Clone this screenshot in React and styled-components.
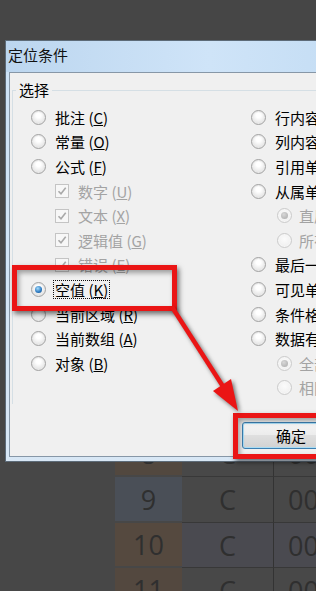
import React from "react";
import styled, { createGlobalStyle } from "styled-components";

const GlobalStyle = createGlobalStyle`
  html, body {
    margin: 0;
    padding: 0;
    background: #464646;
  }
  body {
    overflow: hidden;
    font-family: "Noto Sans CJK SC", "Liberation Sans", sans-serif;
  }
`;

const Page = styled.div`
  position: relative;
  width: 316px;
  height: 591px;
  overflow: hidden;
  background: #464646;
  display: flex;
  flex-direction: column;
  padding-top: 40px;
  box-sizing: border-box;
`;

const Dialog = styled.div`
  position: relative;
  z-index: 2;
  margin-left: 5px;
  width: 340px;
  height: 422px;
  flex-shrink: 0;
  box-sizing: border-box;
  border: 1px solid #5d6b78;
  border-right: none;
  background: linear-gradient(to bottom, #c2daf1 0, #cde2f6 30px, #d8e7f5 100%);
  display: flex;
  flex-direction: column;
`;

const TitleBar = styled.div`
  height: 31px;
  display: flex;
  align-items: center;
  padding: 0 0 4px 2px;
  box-sizing: border-box;
  font-size: 15px;
  color: #111;
  background: linear-gradient(to right, #bcd6ef, #cfe4f8 60%, #c4ddf4);
`;

const Client = styled.div`
  flex: 1;
  margin: 0 0 4px 3px;
  border: 1px solid #8797a7;
  border-right: none;
  background: #f0f0f0;
  display: flex;
  flex-direction: column;
`;

const Group = styled.fieldset`
  margin: 9px 0 0 2px;
  padding: 0;
  height: 322px;
  box-sizing: border-box;
  border: 1px solid #d5dfe5;
  border-right: none;
  border-bottom: none;
`;

const Legend = styled.legend`
  margin-left: 3px;
  padding: 0 3px;
  font-size: 15px;
  line-height: 16px;
  color: #000;
`;

const Columns = styled.div`
  display: grid;
  grid-template-columns: 220px 1fr;
  padding: 7px 0 0 18px;
`;

const Column = styled.div`
  display: flex;
  flex-direction: column;
`;

const Row = styled.div`
  height: 24.6px;
  display: flex;
  align-items: center;
  padding-left: ${(p) => p.$indent || 0}px;
  white-space: nowrap;
`;

const Radio = styled.span`
  position: relative;
  flex-shrink: 0;
  width: 13px;
  height: 13px;
  margin-right: ${(p) => p.$gap}px;
  border-radius: 50%;
  border: 1px solid ${(p) => (p.$disabled ? "#cbcbcb" : "#a2a2a2")};
  background: ${(p) =>
    p.$disabled
      ? "radial-gradient(circle at 50% 40%, #fbfbfb, #ececec)"
      : "radial-gradient(circle at 50% 35%, #ffffff 20%, #d6d6d6 100%)"};
  box-shadow: inset 0 0 0 1px ${(p) => (p.$disabled ? "#f6f6f6" : "#e9e9e9")};
  &::after {
    content: "";
    display: ${(p) => (p.$checked ? "block" : "none")};
    position: absolute;
    left: 3px;
    top: 3px;
    width: 7px;
    height: 7px;
    border-radius: 50%;
    background: ${(p) =>
      p.$disabled
        ? "radial-gradient(circle at 40% 35%, #d8d8d8, #a9a9a9)"
        : "radial-gradient(circle at 40% 35%, #a6dcfb, #2a78c0 60%, #16477a)"};
  }
`;

const Box = styled.span`
  flex-shrink: 0;
  width: 14px;
  height: 14px;
  margin-right: 8px;
  box-sizing: border-box;
  border: 1px solid #c4c4c4;
  background: #f7f7f7;
  display: flex;
  align-items: center;
  justify-content: center;
`;

const Label = styled.span`
  font-size: 15px;
  line-height: 17px;
  color: ${(p) => (p.$disabled ? "#a3a3a3" : "#000")};
  outline: ${(p) => (p.$focus ? "1px dotted #111" : "none")};
  outline-offset: 0px;
  padding: 0 1px;
`;

const ButtonRow = styled.div`
  display: flex;
  margin-top: 18px;
  padding-left: 232px;
`;

const OkButton = styled.button`
  width: 98px;
  height: 27px;
  flex-shrink: 0;
  border: 1px solid #3c7fb1;
  border-radius: 3px;
  background: linear-gradient(to bottom, #f4f4f4, #ececec 50%, #dfdfdf 50%, #d2d2d2);
  box-shadow: inset 0 0 0 1px #a9dcf4;
  font-family: "Noto Sans CJK SC", sans-serif;
  font-size: 15px;
  color: #000;
  padding: 0;
`;

const Sheet = styled.div`
  margin-top: -31px;
  display: grid;
  grid-template-columns: 115px 67px 91px 1fr;
  grid-template-rows: 46px 46px 45px 45px;
  font-family: "Open Sans", "Liberation Sans", sans-serif;
  font-size: 27px;
  color: #2f2f2f;
`;

const Blank = styled.div`
  background: #474747;
`;

const Header = styled.div`
  display: flex;
  align-items: center;
  justify-content: center;
  background: ${(p) => p.$tone};
  border-bottom: 2px solid #474747;
`;

const Cell = styled.div`
  display: flex;
  align-items: center;
  justify-content: ${(p) => (p.$left ? "flex-start" : "center")};
  padding-left: ${(p) => (p.$left ? 14 : 0)}px;
  background: ${(p) => p.$bg || "#484848"};
  border-bottom: 1px solid #383838;
  border-left: ${(p) => (p.$left ? "1px solid #333" : "none")};
`;

const RedFrame = styled.div`
  position: absolute;
  z-index: 3;
  left: ${(p) => p.$x}px;
  top: ${(p) => p.$y}px;
  width: ${(p) => p.$w}px;
  height: ${(p) => p.$h}px;
  box-sizing: border-box;
  border: 5px solid #ea1515;
  box-shadow: 2px 3px 5px rgba(0, 0, 0, 0.55), inset 2px 3px 5px rgba(0, 0, 0, 0.35);
`;

const ArrowLayer = styled.svg`
  position: absolute;
  z-index: 4;
  left: 0;
  top: 0;
  pointer-events: none;
  filter: drop-shadow(2px 2px 2px rgba(0, 0, 0, 0.55));
`;

const Check = () => (
  <svg width="10" height="10" viewBox="0 0 10 10">
    <path d="M1.5 5.2 L4 7.8 L8.7 1.8" fill="none" stroke="#a9a9a9" strokeWidth="1.6" />
  </svg>
);

const Key = ({ k }) => (
  <>
    {" ("}
    <u>{k}</u>
    {")"}
  </>
);

const left = [
  { t: "radio", name: "批注", k: "C" },
  { t: "radio", name: "常量", k: "O" },
  { t: "radio", name: "公式", k: "F" },
  { t: "check", name: "数字", k: "U" },
  { t: "check", name: "文本", k: "X" },
  { t: "check", name: "逻辑值", k: "G" },
  { t: "check", name: "错误", k: "E" },
  { t: "radio", name: "空值", k: "K", checked: true, focus: true },
  { t: "radio", name: "当前区域", k: "R" },
  { t: "radio", name: "当前数组", k: "A" },
  { t: "radio", name: "对象", k: "B" },
];

const right = [
  { t: "radio", name: "行内容差异单元格", k: "W" },
  { t: "radio", name: "列内容差异单元格", k: "M" },
  { t: "radio", name: "引用单元格", k: "P" },
  { t: "radio", name: "从属单元格", k: "D" },
  { t: "sub", name: "直属", k: "I", checked: true },
  { t: "sub", name: "所有级别", k: "L" },
  { t: "radio", name: "最后一个单元格", k: "S" },
  { t: "radio", name: "可见单元格", k: "Y" },
  { t: "radio", name: "条件格式", k: "T" },
  { t: "radio", name: "数据有效性", k: "V" },
  { t: "sub", name: "全部", k: "L", checked: true },
  { t: "sub", name: "相同", k: "E" },
];

function Option({ item }) {
  if (item.t === "check") {
    return (
      <Row $indent={24}>
        <Box>
          <Check />
        </Box>
        <Label $disabled>
          {item.name}
          <Key k={item.k} />
        </Label>
      </Row>
    );
  }
  const sub = item.t === "sub";
  return (
    <Row $indent={sub ? 26 : 0}>
      <Radio $gap={sub ? 6 : 8} $checked={item.checked} $disabled={sub} />
      <Label $disabled={sub} $focus={item.focus}>
        {item.name}
        <Key k={item.k} />
      </Label>
    </Row>
  );
}

const rows = [
  { n: "8", tone: "#52483f" },
  { n: "9", tone: "#4a4f57", bg: "#484848" },
  { n: "10", tone: "#55493f", bg: "#4a4a50" },
  { n: "11", tone: "#53483f" },
];

export default function App() {
  return (
    <>
      <GlobalStyle />
      <Page>
        <Dialog>
          <TitleBar>定位条件</TitleBar>
          <Client>
            <Group>
              <Legend>选择</Legend>
              <Columns>
                <Column>
                  {left.map((it) => (
                    <Option key={it.name} item={it} />
                  ))}
                </Column>
                <Column>
                  {right.map((it) => (
                    <Option key={it.name} item={it} />
                  ))}
                </Column>
              </Columns>
            </Group>
            <ButtonRow>
              <OkButton>确定</OkButton>
            </ButtonRow>
          </Client>
        </Dialog>

        <Sheet>
          {rows.map((r) => (
            <React.Fragment key={r.n}>
              <Blank />
              <Header $tone={r.tone}>{r.n}</Header>
              <Cell $bg={r.bg}>C</Cell>
              <Cell $bg={r.bg} $left>
                00
              </Cell>
            </React.Fragment>
          ))}
        </Sheet>

        <RedFrame $x={12} $y={265} $w={165} $h={46} />
        <RedFrame $x={233} $y={413} $w={100} $h={46} />

        <ArrowLayer width="316" height="591" viewBox="0 0 316 591">
          <line x1="172" y1="307" x2="224" y2="388" stroke="#ea1515" strokeWidth="4.5" />
          <polygon points="238,411 213,391 231,379" fill="#ea1515" />
        </ArrowLayer>
      </Page>
    </>
  );
}
